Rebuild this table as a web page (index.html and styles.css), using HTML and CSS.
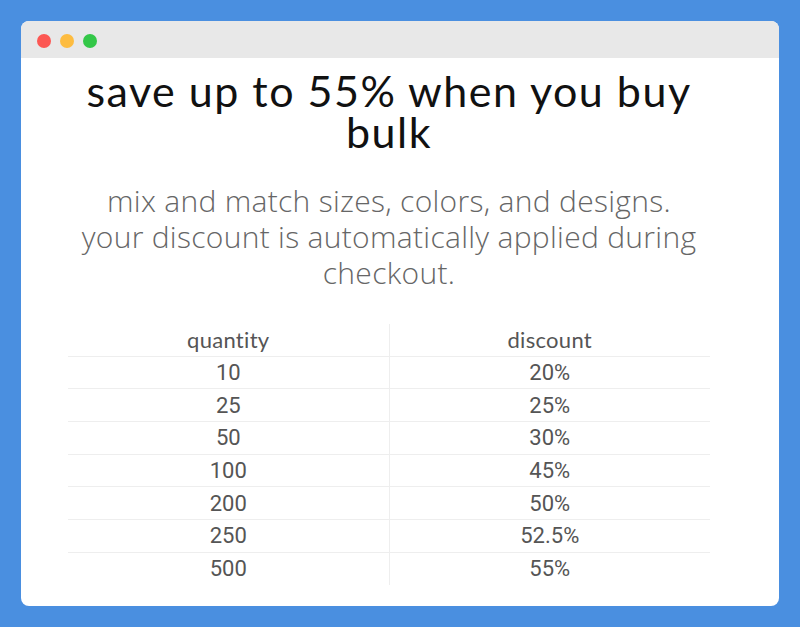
FILE: index.html
```html
<!DOCTYPE html>
<html>
<head>
<meta charset="utf-8">
<link rel="stylesheet" href="styles.css">
</head>
<body>
<div class="window">
  <div class="titlebar">
    <span class="dot red"></span>
    <span class="dot yellow"></span>
    <span class="dot green"></span>
  </div>
  <div class="content">
    <h1 class="title">save up to 55% when you buy bulk</h1>
    <p class="sub">mix and match sizes, colors, and designs. your discount is automatically applied during checkout.</p>
    <table class="tbl">
      <thead>
        <tr><th>quantity</th><th>discount</th></tr>
      </thead>
      <tbody>
        <tr><td>10</td><td>20%</td></tr>
        <tr><td>25</td><td>25%</td></tr>
        <tr><td>50</td><td>30%</td></tr>
        <tr><td>100</td><td>45%</td></tr>
        <tr><td>200</td><td>50%</td></tr>
        <tr><td>250</td><td>52.5%</td></tr>
        <tr><td>500</td><td>55%</td></tr>
      </tbody>
    </table>
  </div>
</div>
</body>
</html>
```

FILE: styles.css
```css
html, body {
  margin: 0;
  padding: 0;
}
body {
  background: #4a8fe0;
  width: 800px;
  height: 627px;
  padding: 21px;
  box-sizing: border-box;
  font-family: "Lato", sans-serif;
}
.window {
  width: 758px;
  height: 585px;
  background: #fff;
  border-radius: 8px;
  overflow: hidden;
}
.titlebar {
  height: 37px;
  background: #e8e8e8;
  display: flex;
  align-items: center;
  gap: 9px;
  padding-left: 16px;
  padding-top: 2px;
  box-sizing: border-box;
}
.dot {
  width: 14px;
  height: 14px;
  border-radius: 50%;
  display: block;
}
.red { background: #fc5753; }
.yellow { background: #fdbc40; }
.green { background: #33c748; }
.content {
  padding: 0 69px 0 47px;
}
.title {
  margin: 12px -20px 0;
  padding: 0 20px;
  font-family: "Lato", sans-serif;
  font-weight: 400;
  font-size: 43px;
  letter-spacing: 1.5px;
  line-height: 41px;
  text-align: center;
  color: #111;
}
.sub {
  margin: 31px auto 0;
  max-width: 628px;
  font-family: "Open Sans", sans-serif;
  font-weight: 300;
  font-size: 30px;
  letter-spacing: 0.3px;
  line-height: 36px;
  text-align: center;
  color: #666;
}
.tbl {
  margin-top: 33px;
  width: 100%;
  border-collapse: collapse;
  color: #555;
}
.tbl th, .tbl td {
  width: 50%;
  text-align: center;
  height: 31.7px;
  padding: 0;
  border-top: 1px solid #eeeeee;
}
.tbl th {
  font-family: "Lato", sans-serif;
  font-weight: 400;
  font-size: 22px;
  letter-spacing: 0.3px;
  border-top: none;
  color: #555;
}
.tbl td {
  font-family: "Roboto", sans-serif;
  font-size: 22px;
}
.tbl th + th, .tbl td + td {
  border-left: 1px solid #eeeeee;
}
```
